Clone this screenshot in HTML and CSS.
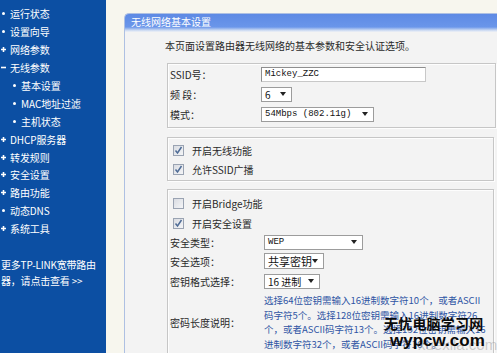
FILE: index.html
```html
<!DOCTYPE html>
<html lang="zh-CN">
<head>
<meta charset="utf-8">
<title>无线网络基本设置</title>
<link rel="stylesheet" href="styles.css">
</head>
<body>
<div class="page">
  <nav class="side">
    <ul class="menu">
      <li class="item"><svg class="b" width="7" height="7" viewBox="0 0 7 7"><circle cx="3.5" cy="3.5" r="1.5" fill="#fff"/></svg>运行状态</li>
      <li class="item"><svg class="b" width="7" height="7" viewBox="0 0 7 7"><circle cx="3.5" cy="3.5" r="1.5" fill="#fff"/></svg>设置向导</li>
      <li class="item"><svg class="b" width="7" height="7" viewBox="0 0 7 7"><path d="M3.5 1v5M1 3.5h5" stroke="#fff" stroke-width="1.6"/></svg>网络参数</li>
      <li class="item"><svg class="b" width="7" height="7" viewBox="0 0 7 7"><path d="M1 3.5h5" stroke="#fff" stroke-width="1.6"/></svg>无线参数</li>
      <li class="item sub"><svg class="b" width="7" height="7" viewBox="0 0 7 7"><circle cx="3.5" cy="3.5" r="1.5" fill="#fff"/></svg>基本设置</li>
      <li class="item sub"><svg class="b" width="7" height="7" viewBox="0 0 7 7"><circle cx="3.5" cy="3.5" r="1.5" fill="#fff"/></svg>MAC地址过滤</li>
      <li class="item sub"><svg class="b" width="7" height="7" viewBox="0 0 7 7"><circle cx="3.5" cy="3.5" r="1.5" fill="#fff"/></svg>主机状态</li>
      <li class="item"><svg class="b" width="7" height="7" viewBox="0 0 7 7"><path d="M3.5 1v5M1 3.5h5" stroke="#fff" stroke-width="1.6"/></svg>DHCP服务器</li>
      <li class="item"><svg class="b" width="7" height="7" viewBox="0 0 7 7"><path d="M3.5 1v5M1 3.5h5" stroke="#fff" stroke-width="1.6"/></svg>转发规则</li>
      <li class="item"><svg class="b" width="7" height="7" viewBox="0 0 7 7"><path d="M3.5 1v5M1 3.5h5" stroke="#fff" stroke-width="1.6"/></svg>安全设置</li>
      <li class="item"><svg class="b" width="7" height="7" viewBox="0 0 7 7"><path d="M3.5 1v5M1 3.5h5" stroke="#fff" stroke-width="1.6"/></svg>路由功能</li>
      <li class="item"><svg class="b" width="7" height="7" viewBox="0 0 7 7"><circle cx="3.5" cy="3.5" r="1.5" fill="#fff"/></svg>动态DNS</li>
      <li class="item"><svg class="b" width="7" height="7" viewBox="0 0 7 7"><path d="M3.5 1v5M1 3.5h5" stroke="#fff" stroke-width="1.6"/></svg>系统工具</li>
    </ul>
    <p class="more">更多TP-LINK宽带路由<br>器，请点击查看 &gt;&gt;</p>
  </nav>

  <main class="main">
    <section class="panel">
      <div class="panel-head">无线网络基本设置</div>
      <p class="intro">本页面设置路由器无线网络的基本参数和安全认证选项。</p>

      <div class="box box1">
        <div class="row"><span class="lbl">SSID号：</span><span class="input w-ssid">Mickey_ZZC</span></div>
        <div class="row"><span class="lbl">频 段：</span><span class="sel w-ch"><span class="val">6</span><i class="arr"></i></span></div>
        <div class="row"><span class="lbl">模式：</span><span class="sel w-mode"><span class="val mono">54Mbps (802.11g)</span><i class="arr"></i></span></div>
      </div>

      <div class="box box2">
        <div class="check"><span class="cb on"><svg width="9" height="9" viewBox="0 0 9 9"><path d="M1.5 4.5l2 2.5 4-6" fill="none" stroke="#4f6c96" stroke-width="1.5"/></svg></span>开启无线功能</div>
        <div class="check"><span class="cb on"><svg width="9" height="9" viewBox="0 0 9 9"><path d="M1.5 4.5l2 2.5 4-6" fill="none" stroke="#4f6c96" stroke-width="1.5"/></svg></span>允许SSID广播</div>
      </div>

      <div class="box box3">
        <div class="check tall"><span class="cb"></span>开启Bridge功能</div>
        <div class="check tall"><span class="cb on"><svg width="9" height="9" viewBox="0 0 9 9"><path d="M1.5 4.5l2 2.5 4-6" fill="none" stroke="#4f6c96" stroke-width="1.5"/></svg></span>开启安全设置</div>
        <div class="row r2 short"><span class="lbl">安全类型：</span><span class="sel w-type"><span class="val mono">WEP</span><i class="arr"></i></span></div>
        <div class="row r2"><span class="lbl">安全选项：</span><span class="sel w-opt"><span class="val big">共享密钥</span><i class="arr"></i></span></div>
        <div class="row r2"><span class="lbl">密钥格式选择：</span><span class="sel w-fmt"><span class="val">16 进制</span><i class="arr"></i></span></div>
        <div class="row r2 desc-row"><span class="lbl">密码长度说明：</span>
          <p class="desc">选择64位密钥需输入16进制数字符10个，或者ASCII<br>码字符5个。选择128位密钥需输入16进制数字符26<br>个，或者ASCII码字符13个。选择152位密钥需输入16<br>进制数字符32个，或者ASCII码字符16个。</p>
        </div>
      </div>
    </section>
  </main>

  <div class="wm">
    <span class="wm-ghost">xuexila.com</span>
    <span class="wm-cn">无忧电脑学习网</span>
    <span class="wm-en">wypcw.com</span>
  </div>
</div>
</body>
</html>
```

FILE: styles.css
```css
html, body {
  margin: 0;
  padding: 0;
}
body {
  width: 497px;
  height: 353px;
  overflow: hidden;
  font-family: "Noto Sans CJK SC", "Liberation Sans", sans-serif;
  font-size: 10px;
  color: #2a2a2a;
}
.page {
  display: flex;
  height: 353px;
  position: relative;
}

/* sidebar */
.side {
  width: 106px;
  flex: none;
  background: #0c4fa3;
  color: #fff;
}
.menu {
  list-style: none;
  margin: 0;
  padding: 5px 0 0 0;
}
.item {
  height: 17.9px;
  display: flex;
  align-items: center;
  padding-left: 0;
  white-space: nowrap;
  letter-spacing: -0.1px;
}
.item .b {
  flex: none;
  margin-right: 3px;
}
.item.sub {
  padding-left: 11px;
}
.more {
  margin: 19px 0 0 1px;
  line-height: 16px;
  white-space: nowrap;
  letter-spacing: -0.2px;
}

/* main */
.main {
  flex: 1;
  min-width: 0;
  background: #f7f6ee;
  padding: 13px 0 0 18px;
  overflow: hidden;
}
.panel {
  background: #f3f3f3;
  border: 1px solid #aec0e2;
  border-right: none;
  border-bottom: none;
  border-radius: 5px 0 0 0;
  margin-right: -6px;
  min-height: 360px;
}
.panel-head {
  height: 18px;
  line-height: 16px;
  padding-left: 6px;
  color: #fff;
  border-radius: 4px 0 0 0;
  background: linear-gradient(#5e8ae4 0%, #6a96ea 72%, #c9d8f2 90%, #eef1f6 100%);
}
.intro {
  margin: 7px 0 0 40px;
  line-height: 14px;
  white-space: nowrap;
}

.box {
  width: 325px;
  margin: 10px 0 0 42px;
  border: 1px solid #c6c6c6;
  box-shadow: inset 1px 1px 0 #fdfdfd, 1px 1px 0 #fdfdfd;
}
.box1 {
  padding: 0 0 3px 2px;
}
.box2 {
  margin-top: 9px;
  padding: 3px 0 1px 0;
}
.box3 {
  margin-top: 8px;
  padding: 3px 0 10px 0;
}

.row {
  display: grid;
  grid-template-columns: 91px auto;
  align-items: center;
  height: 20px;
}
.row.r2 {
  grid-template-columns: 94px auto;
  padding-left: 2px;
}
.row.short {
  height: 18px;
}
.lbl {
  white-space: nowrap;
}

.input {
  display: flex;
  align-items: center;
  height: 15px;
  box-sizing: border-box;
  padding-left: 3px;
  background: #fff;
  border: 1px solid #8e8e8e;
  border-right-color: #c8c8c8;
  border-bottom-color: #c8c8c8;
  font-family: "Liberation Mono", monospace;
  font-size: 9px;
  color: #111;
}
.w-ssid { width: 165px; }

.sel {
  display: flex;
  align-items: center;
  height: 15px;
  box-sizing: border-box;
  padding: 0 5px 0 3px;
  background: #fff;
  border: 1px solid #9c9c9c;
  color: #111;
  white-space: nowrap;
}
.sel .val {
  flex: 1;
}
.sel .mono {
  font-family: "Liberation Mono", monospace;
  font-size: 9px;
}
.sel .big {
  font-size: 11px;
}
.arr {
  flex: none;
  width: 0;
  height: 0;
  border-left: 3px solid transparent;
  border-right: 3px solid transparent;
  border-top: 4px solid #222;
}
.w-ch { width: 31px; }
.w-mode { width: 113px; }
.w-type { width: 99px; }
.w-opt { width: 60px; height: 16px; }
.w-fmt { width: 56px; }

.check {
  display: flex;
  align-items: center;
  height: 19px;
  padding-left: 5px;
}
.check.tall {
  height: 20px;
}
.cb {
  width: 11px;
  height: 11px;
  box-sizing: border-box;
  margin-right: 8px;
  border: 1px solid #9aa3b2;
  background: linear-gradient(135deg, #d9dce2, #f4f5f7);
  display: flex;
  align-items: center;
  justify-content: center;
}

.desc-row {
  height: auto;
  margin-top: 2px;
}
.desc {
  margin: 0;
  font-size: 9.5px;
  line-height: 14.5px;
  color: #2f55a4;
  white-space: nowrap;
}

/* watermark overlay */
.wm {
  position: absolute;
  left: 384px;
  top: 314px;
  width: 113px;
  height: 39px;
  display: flex;
  flex-direction: column;
  align-items: flex-start;
}
.wm-ghost {
  position: absolute;
  left: 34px;
  top: 22px;
  font-family: "Liberation Sans", sans-serif;
  font-size: 15px;
  color: rgba(150, 150, 150, 0.45);
}
.wm-cn {
  position: relative;
  font-family: "Noto Sans CJK SC", sans-serif;
  font-weight: 700;
  font-size: 14px;
  line-height: 18px;
  color: #0a0a0a;
  letter-spacing: 0.2px;
}
.wm-en {
  position: relative;
  margin-left: 6px;
  font-family: "Liberation Sans", sans-serif;
  font-weight: 700;
  font-size: 17px;
  line-height: 18px;
  color: #0a0a0a;
}
```
